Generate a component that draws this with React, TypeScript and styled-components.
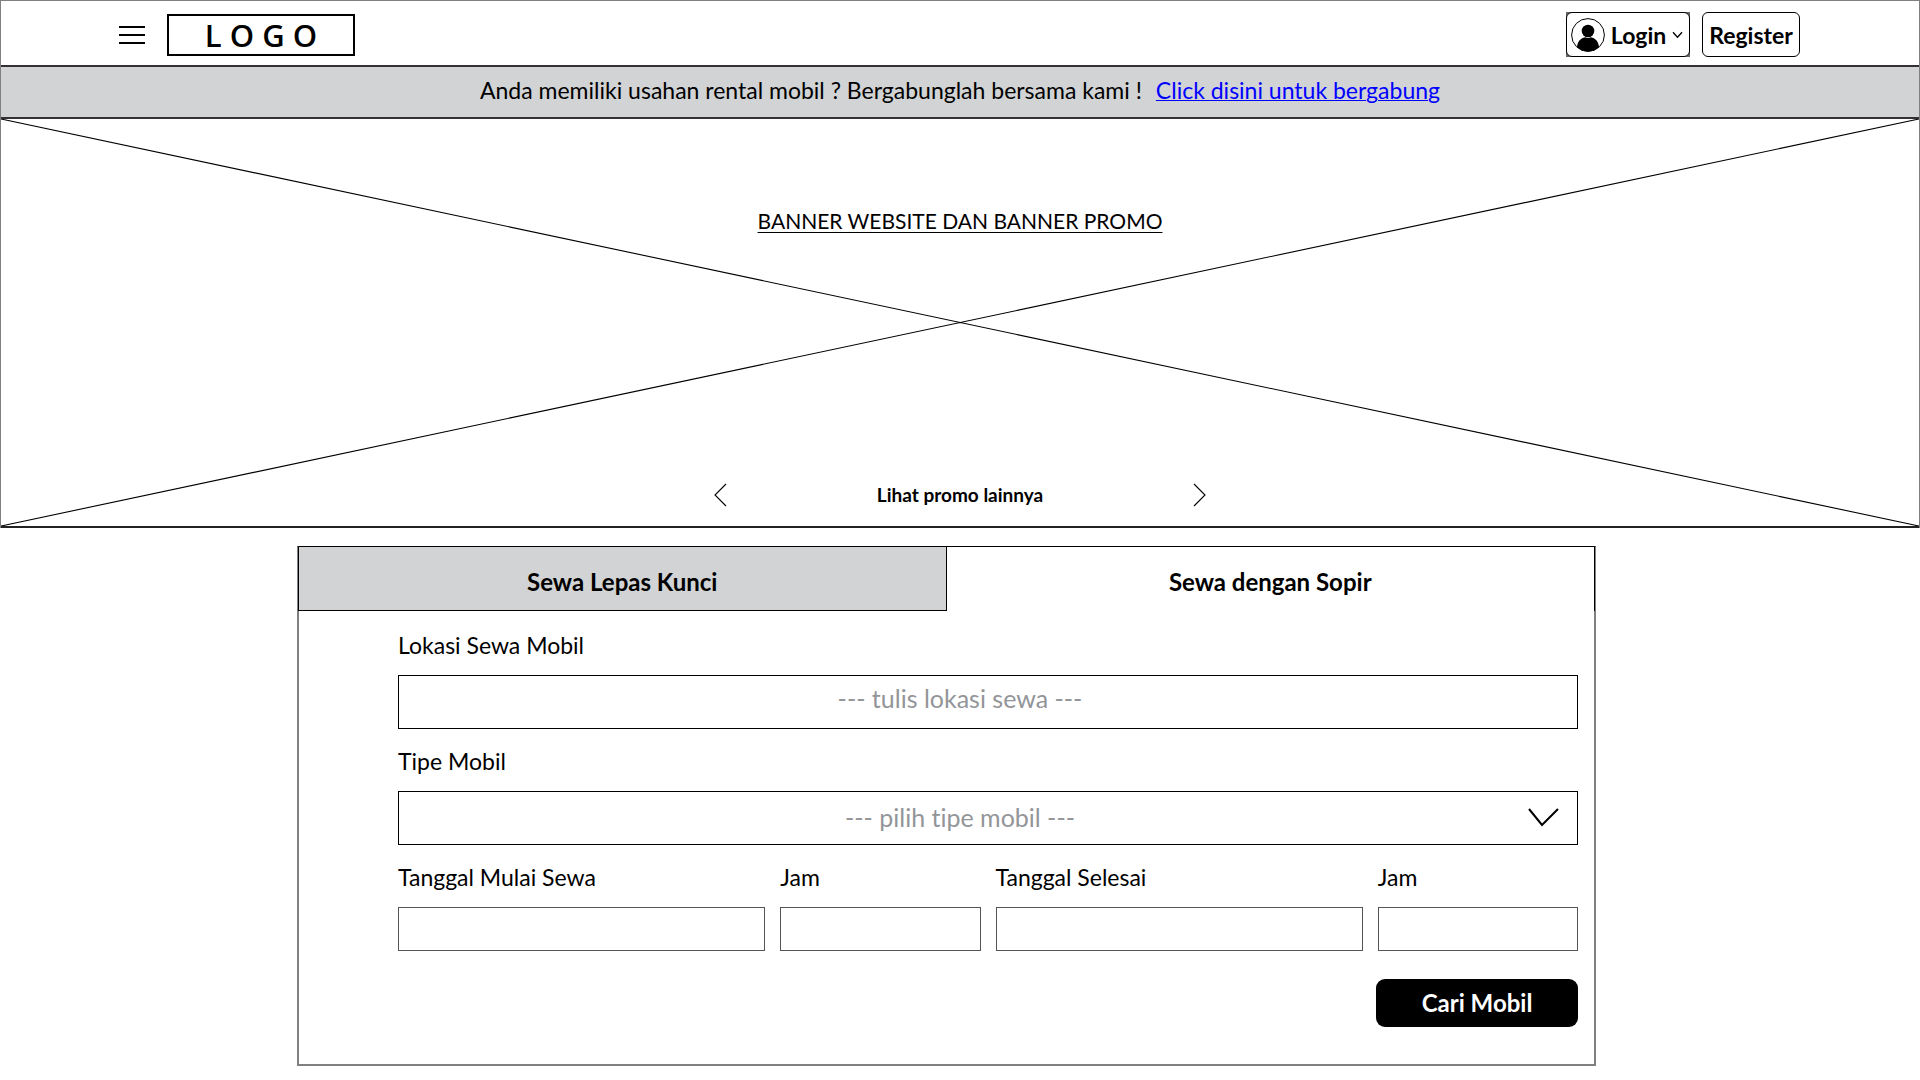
import React, { useState } from "react";
import styled, { createGlobalStyle } from "styled-components";

const GlobalStyle = createGlobalStyle`
  *, *::before, *::after { box-sizing: border-box; }
  body {
    margin: 0;
    background: #fff;
    color: #000;
    font-family: Lato, "Open Sans", "Noto Sans", sans-serif;
    font-size: 23px;
    line-height: 28px;
    font-variant-ligatures: none;
  }
  button, input, select { font: inherit; color: inherit; margin: 0; }
  button { cursor: pointer; }
`;

const TopFrame = styled.div`
  border: solid #808080;
  border-width: 1px 1px 0;
`;

const Header = styled.header`
  display: flex;
  align-items: center;
  justify-content: space-between;
  height: 66px;
  padding: 3px 119px 0 117px;
  border-bottom: 2px solid #333132;
`;

const HeaderGroup = styled.div<{ $gap: number }>`
  display: flex;
  align-items: center;
  gap: ${p => p.$gap}px;
`;

const IconButton = styled.button`
  display: flex;
  padding: 0;
  border: 0;
  background: none;
`;

const Logo = styled.a`
  display: flex;
  align-items: center;
  justify-content: center;
  width: 188px;
  height: 42px;
  border: 2px solid #000;
  color: #000;
  font: 600 31px/36px "Open Sans", "Noto Sans", sans-serif;
  text-decoration: none;
`;

const LoginButton = styled.button`
  display: flex;
  width: 124px;
  height: 45px;
  padding: 0;
  border: 0;
  background: #666;
`;

const LoginFace = styled.span`
  flex: 1;
  display: flex;
  align-items: center;
  justify-content: space-between;
  padding: 0 6px 0 4px;
  border: 1px solid #000;
  border-radius: 6px;
  background: #fff;
  font-weight: 700;
`;

const RegisterButton = styled.button`
  width: 98px;
  height: 45px;
  padding: 0;
  border: 1px solid #000;
  border-radius: 6px;
  background: #fff;
  font-weight: 700;
`;

const Notice = styled.p`
  display: flex;
  flex-wrap: wrap;
  justify-content: center;
  gap: 0 14px;
  margin: 0;
  padding: 9px 0 13px;
  border-bottom: 2px solid #333132;
  background: #d1d3d4;

  a {
    color: #00f;
    text-decoration-thickness: 1px;
  }
`;

const Banner = styled.section`
  position: relative;
  display: flex;
  flex-direction: column;
  align-items: center;
  justify-content: space-between;
  height: 409px;
  padding: 88px 0 17px;
  border-bottom: 2px solid #222;
`;

const BannerCross = styled.svg`
  position: absolute;
  inset: 0;
  width: 100%;
  height: 100%;
`;

const BannerTitle = styled.h1`
  position: relative;
  margin: 0;
  font-size: 21px;
  font-weight: 400;
  line-height: 28px;
  text-decoration: underline;
  text-decoration-thickness: 1px;
  text-underline-offset: 3px;
`;

const PromoNav = styled.nav`
  position: relative;
  display: flex;
  align-items: center;
  justify-content: space-between;
  width: 492px;
  font-size: 19px;
  font-weight: 700;
`;

const Main = styled.main`
  padding: 18px 324px 14px 297px;
`;

const Panel = styled.section`
  border: 2px solid #808080;
  border-top: 1px solid #000;
`;

const Tabs = styled.div`
  display: grid;
  grid-template-columns: 1fr 1fr;
  margin: 0 -1px;
`;

const Tab = styled.button<{ $active: boolean }>`
  height: 64px;
  padding: ${p => (p.$active ? 5 : 6)}px 0 0;
  border: solid #000;
  border-width: ${p => (p.$active ? "0 1px 0 0" : "0 1px 1px 1px")};
  background: ${p => (p.$active ? "#fff" : "#d1d3d4")};
  font-size: 24px;
  font-weight: 700;
`;

const Form = styled.form`
  display: flex;
  flex-direction: column;
  gap: 18px;
  padding: 20px 16px 37px 99px;
`;

const Field = styled.div`
  display: flex;
  flex-direction: column;
  gap: 16px;
  min-width: 0;
`;

const LocationInput = styled.input`
  width: 100%;
  height: 54px;
  padding: 0 56px 8px 0;
  border: 1px solid #000;
  background: #fff;
  font-size: 25px;
  text-align: center;

  &::placeholder { color: #939598; opacity: 1; }
`;

const SelectWrap = styled.div`
  position: relative;
`;

const TypeSelect = styled.select`
  display: block;
  appearance: none;
  width: 100%;
  height: 54px;
  padding: 0 56px 2px 0;
  border: 1px solid #000;
  border-radius: 0;
  background: #fff;
  color: #939598;
  font-size: 25px;
  text-align: center;
  text-align-last: center;
`;

const SelectArrow = styled.svg`
  position: absolute;
  top: 17px;
  right: 19px;
  pointer-events: none;
`;

const Schedule = styled.div`
  display: grid;
  grid-template-columns: 11fr 6fr 11fr 6fr;
  gap: 15px;
`;

const ScheduleInput = styled.input`
  width: 100%;
  height: 44px;
  padding: 0 12px;
  border: 1px solid #555;
  background: #fff;
`;

const SubmitButton = styled.button`
  align-self: flex-end;
  width: 202px;
  height: 48px;
  margin-top: 10px;
  padding: 0;
  border: 0;
  border-radius: 9px;
  background: #000;
  color: #fff;
  font-size: 24px;
  font-weight: 700;
`;

const schedule = [
  { id: "start-date", label: "Tanggal Mulai Sewa" },
  { id: "start-time", label: "Jam" },
  { id: "end-date", label: "Tanggal Selesai" },
  { id: "end-time", label: "Jam" },
];

const tabs = ["Sewa Lepas Kunci", "Sewa dengan Sopir"];

const MenuIcon = () => (
  <svg width="28" height="20" viewBox="0 0 28 20" stroke="#000" strokeWidth="2" aria-hidden="true">
    <path d="M1 2H27M1 10H27M1 18H27" />
  </svg>
);

const UserIcon = () => (
  <svg width="34" height="34" viewBox="0 0 34 34" aria-hidden="true">
    <circle cx="17" cy="17" r="16.4" fill="#fff" stroke="#000" />
    <circle cx="17" cy="13" r="6.3" />
    <path d="M6 29.2C6.4 23 10 20 14 19.2Q17 20.6 20 19.2C24 20 27.6 23 28 29.2A16.4 16.4 0 0 1 6 29.2Z" />
  </svg>
);

const Chevron = ({ d }: { d: string }) => (
  <svg width="13" height="24" viewBox="0 0 13 24" fill="none" stroke="#000" strokeWidth="1.1" aria-hidden="true">
    <path d={d} />
  </svg>
);

export default function App() {
  const [active, setActive] = useState(1);
  return (
    <>
      <GlobalStyle />
      <TopFrame>
        <Header>
          <HeaderGroup $gap={21}>
            <IconButton aria-label="Menu"><MenuIcon /></IconButton>
            <Logo href="#">L O G O</Logo>
          </HeaderGroup>
          <HeaderGroup $gap={12}>
            <LoginButton>
              <LoginFace>
                <UserIcon />
                Login
                <svg width="11" height="8" viewBox="0 0 11 8" fill="none" stroke="#000" strokeWidth="1.3" aria-hidden="true">
                  <path d="M1 1.2L5.5 6.2L10 1.2" />
                </svg>
              </LoginFace>
            </LoginButton>
            <RegisterButton>Register</RegisterButton>
          </HeaderGroup>
        </Header>
        <Notice>
          <span>Anda memiliki usahan rental mobil ? Bergabunglah bersama kami !</span>
          <a href="#">Click disini untuk bergabung</a>
        </Notice>
        <Banner>
          <BannerCross viewBox="0 0 100 100" preserveAspectRatio="none" aria-hidden="true">
            <path d="M0 0L100 100M0 100L100 0" stroke="#000" strokeWidth="1.1" vectorEffect="non-scaling-stroke" />
          </BannerCross>
          <BannerTitle>BANNER WEBSITE DAN BANNER PROMO</BannerTitle>
          <PromoNav>
            <IconButton aria-label="Sebelumnya"><Chevron d="M12 1L1 12L12 23" /></IconButton>
            <span>Lihat promo lainnya</span>
            <IconButton aria-label="Berikutnya"><Chevron d="M1 1L12 12L1 23" /></IconButton>
          </PromoNav>
        </Banner>
      </TopFrame>
      <Main>
        <Panel>
          <Tabs role="tablist">
            {tabs.map((name, i) => (
              <Tab key={name} role="tab" aria-selected={active === i} $active={active === i} onClick={() => setActive(i)}>
                {name}
              </Tab>
            ))}
          </Tabs>
          <Form onSubmit={e => e.preventDefault()}>
            <Field>
              <label htmlFor="location">Lokasi Sewa Mobil</label>
              <LocationInput id="location" placeholder="--- tulis lokasi sewa ---" />
            </Field>
            <Field>
              <label htmlFor="type">Tipe Mobil</label>
              <SelectWrap>
                <TypeSelect id="type">
                  <option>--- pilih tipe mobil ---</option>
                </TypeSelect>
                <SelectArrow width="32" height="20" viewBox="0 0 32 20" fill="none" stroke="#000" strokeWidth="2" aria-hidden="true">
                  <path d="M2 1L15 17L31 1" />
                </SelectArrow>
              </SelectWrap>
            </Field>
            <Schedule>
              {schedule.map(({ id, label }) => (
                <Field key={id}>
                  <label htmlFor={id}>{label}</label>
                  <ScheduleInput id={id} />
                </Field>
              ))}
            </Schedule>
            <SubmitButton>Cari Mobil</SubmitButton>
          </Form>
        </Panel>
      </Main>
    </>
  );
}
